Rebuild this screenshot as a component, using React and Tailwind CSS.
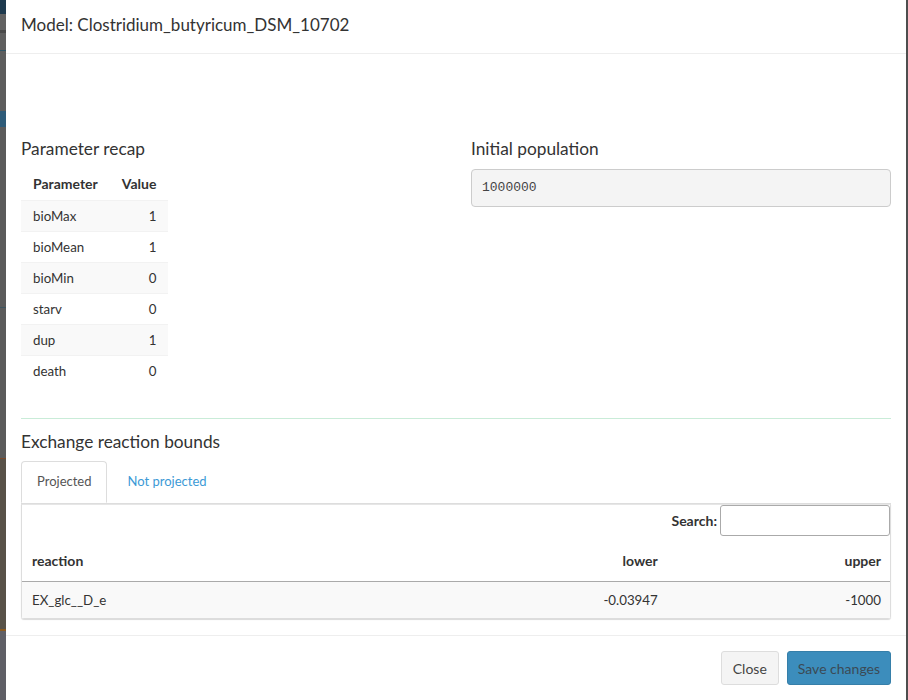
import React from "react";

const params = [
  ["bioMax", "1"],
  ["bioMean", "1"],
  ["bioMin", "0"],
  ["starv", "0"],
  ["dup", "1"],
  ["death", "0"],
];

const font = { fontFamily: "Lato, 'Open Sans', sans-serif" };

function BackdropStrip() {
  return (
    <div className="flex w-[6px] shrink-0 flex-col bg-[#5d5d5d]">
      <div className="h-[14px] bg-[#1e3a4e]" />
      <div className="h-[16px] bg-[#626262]" />
      <div className="h-[3px] bg-[#4a4a4a]" />
      <div className="h-[17px] bg-[#5f5f5f]" />
      <div className="h-px bg-[#2f5566]" />
      <div className="h-[60px] bg-[#5d5d5d]" />
      <div className="h-[16px] bg-[#2e5b78]" />
      <div className="h-[180px] bg-[#5b5b5b]" />
      <div className="h-px bg-[#3e5560]" />
      <div className="h-[150px] bg-[#5b5b5b]" />
      <div className="h-px bg-[#7a4a2a]" />
      <div className="h-[170px] bg-[#585248]" />
      <div className="h-[2px] bg-[#8a5a20]" />
      <div className="flex-1 bg-[#5f5f66]" />
    </div>
  );
}

export default function App() {
  return (
    <div className="flex h-[700px] w-[908px] overflow-hidden bg-[#5d5d5d]" style={font}>
      <BackdropStrip />
      <div className="flex w-[900px] shrink-0 flex-col bg-white text-[#333]">
        {/* header */}
        <div className="flex h-[54px] items-center border-b border-[#eeeeee] px-[15px] pb-[4px]">
          <h3 className="text-[17px] leading-[20px]">Model: Clostridium_butyricum_DSM_10702</h3>
        </div>

        {/* body */}
        <div className="px-[15px] pt-[85px]">
          <div className="grid grid-cols-2 gap-[30px]">
            <div>
              <h4 className="text-[17.3px] leading-[20px]">Parameter recap</h4>
              <table className="mt-[9px] text-[13.3px] leading-[14px]">
                <thead>
                  <tr>
                    <th className="px-3 pb-[9px] pt-[9px] text-left text-[14px] font-bold">Parameter</th>
                    <th className="px-3 pb-[9px] pt-[9px] text-right text-[14px] font-bold">Value</th>
                  </tr>
                </thead>
                <tbody>
                  {params.map(([k, v], i) => (
                    <tr
                      key={k}
                      className={`border-t border-[#f2f2f2] ${i % 2 === 0 ? "bg-[#f9f9f9]" : "bg-white"}`}
                    >
                      <td className="px-3 py-[8px]">{k}</td>
                      <td className="px-3 py-[8px] text-right">{v}</td>
                    </tr>
                  ))}
                </tbody>
              </table>
            </div>
            <div>
              <h4 className="text-[17.3px] leading-[20px]">Initial population</h4>
              <div
                className="mt-[10px] flex h-[38px] items-center rounded-[4px] border border-[#cccccc] bg-[#f4f4f4] px-[10px] text-[13px] text-[#444]"
                style={{ fontFamily: "'Liberation Mono', monospace" }}
              >
                1000000
              </div>
            </div>
          </div>

          <div className="mt-[32px] h-px bg-[#c9ecd8]" />

          <h4 className="mt-[13px] text-[17.3px] leading-[20px]">Exchange reaction bounds</h4>

          {/* tabs */}
          <div className="mt-[9px] flex border-b border-[#dddddd] text-[13px]">
            <div className="-mb-px flex h-[42px] items-center rounded-t-[4px] border border-b-white border-[#dddddd] bg-white px-[15px] text-[#555]">
              Projected
            </div>
            <div className="ml-[6px] flex h-[42px] items-center px-[14px] text-[#3c9ad6]">
              Not projected
            </div>
          </div>

          <div className="rounded-b-[3px] border border-t-[#e6e6e6] border-[#dddddd] shadow-[0_1px_1px_rgba(0,0,0,0.15)]">
            <div className="flex items-center justify-end">
              <label className="mr-[3px] text-[14px] font-bold">Search:</label>
              <input className="h-[31px] w-[170px] rounded-[3px] border border-[#aaaaaa] bg-white" />
            </div>
            <table className="mt-[4px] w-full table-fixed text-[13.3px] leading-[15px]">
              <colgroup>
                <col className="w-[423px]" />
                <col className="w-[222px]" />
                <col className="w-[222px]" />
              </colgroup>
              <thead>
                <tr className="border-b border-[#aaaaaa] text-[14px]">
                  <th className="px-[10px] py-[13px] text-left font-bold">reaction</th>
                  <th className="px-[10px] py-[13px] text-right font-bold">lower</th>
                  <th className="px-[9px] py-[13px] text-right font-bold">upper</th>
                </tr>
              </thead>
              <tbody>
                <tr className="bg-[#f9f9f9]">
                  <td className="px-[10px] pb-[10px] pt-[11px]">EX_glc__D_e</td>
                  <td className="px-[10px] pb-[10px] pt-[11px] text-right">-0.03947</td>
                  <td className="px-[9px] pb-[10px] pt-[11px] text-right">-1000</td>
                </tr>
              </tbody>
            </table>
          </div>
        </div>

        {/* footer */}
        <div className="mt-[16px] flex justify-end gap-[8px] border-t border-[#eeeeee] px-[15px] pt-[15px]">
          <button className="h-[34px] rounded-[3px] border border-[#dddddd] bg-[#f4f4f4] px-[11px] text-[14px] text-[#444]">
            Close
          </button>
          <button className="h-[34px] rounded-[3px] border border-[#367fa9] bg-[#3c8dbc] px-[10px] text-[14px] text-[#3b4a55]">
            Save changes
          </button>
        </div>
      </div>
      <div className="w-[2px] shrink-0 bg-[#4e4e4e]" />
    </div>
  );
}
